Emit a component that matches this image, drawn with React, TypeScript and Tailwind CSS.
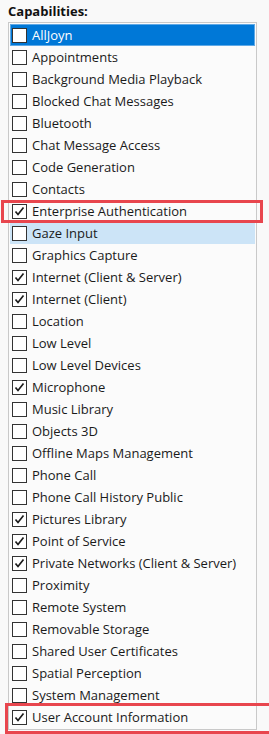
import React from "react";

const items: [string, boolean][] = [
  ["AllJoyn", false],
  ["Appointments", false],
  ["Background Media Playback", false],
  ["Blocked Chat Messages", false],
  ["Bluetooth", false],
  ["Chat Message Access", false],
  ["Code Generation", false],
  ["Contacts", false],
  ["Enterprise Authentication", true],
  ["Gaze Input", false],
  ["Graphics Capture", false],
  ["Internet (Client & Server)", true],
  ["Internet (Client)", true],
  ["Location", false],
  ["Low Level", false],
  ["Low Level Devices", false],
  ["Microphone", true],
  ["Music Library", false],
  ["Objects 3D", false],
  ["Offline Maps Management", false],
  ["Phone Call", false],
  ["Phone Call History Public", false],
  ["Pictures Library", true],
  ["Point of Service", true],
  ["Private Networks (Client & Server)", true],
  ["Proximity", false],
  ["Remote System", false],
  ["Removable Storage", false],
  ["Shared User Certificates", false],
  ["Spatial Perception", false],
  ["System Management", false],
  ["User Account Information", true],
];

function Box({ checked }: { checked: boolean }) {
  return (
    <div className="w-[15px] h-[15px] shrink-0 border border-[#333333] bg-white flex items-center justify-center">
      {checked && (
        <svg width="13" height="13" viewBox="0 0 13 13">
          <polyline points="2.5,6.5 5,9.5 10.5,2.5" fill="none" stroke="#1a1a1a" strokeWidth="1.7" />
        </svg>
      )}
    </div>
  );
}

export default function App() {
  return (
    <div
      className="relative w-[269px] h-[734px] overflow-hidden bg-[#f9f9f9] text-[13px] text-[#1a1a1a]"
      style={{ fontFamily: '"Open Sans", "Noto Sans", sans-serif' }}
    >
      <div className="pl-[8px] pt-[2px] h-[22px] font-bold text-[13px] leading-[18px] text-[#111111]">Capabilities:</div>
      <div className="ml-[8px] w-[249px] border border-[#c9c9c9] bg-[#fbfbfb] p-[1px]">
        {items.map(([label, checked], i) => {
          const selected = i === 0;
          const hover = i === 9;
          return (
            <div
              key={label}
              className={
                "h-[22px] flex items-center gap-[5px] pl-[2px] " +
                (selected
                  ? "bg-[#0078d7] text-white outline outline-1 -outline-offset-1 outline-[#5fa9e6]"
                  : hover
                  ? "bg-[#cce4f7]"
                  : "")
              }
            >
              <Box checked={checked} />
              <span className="leading-[22px] whitespace-nowrap">{label}</span>
            </div>
          );
        })}
      </div>
      <div className="absolute left-[1px] top-[200px] w-[262px] h-[23px] border-[3px] border-[#e8464e]" />
      <div className="absolute left-[5px] top-[703px] w-[268px] h-[31px] border-[3px] border-[#e8464e]" />
    </div>
  );
}
